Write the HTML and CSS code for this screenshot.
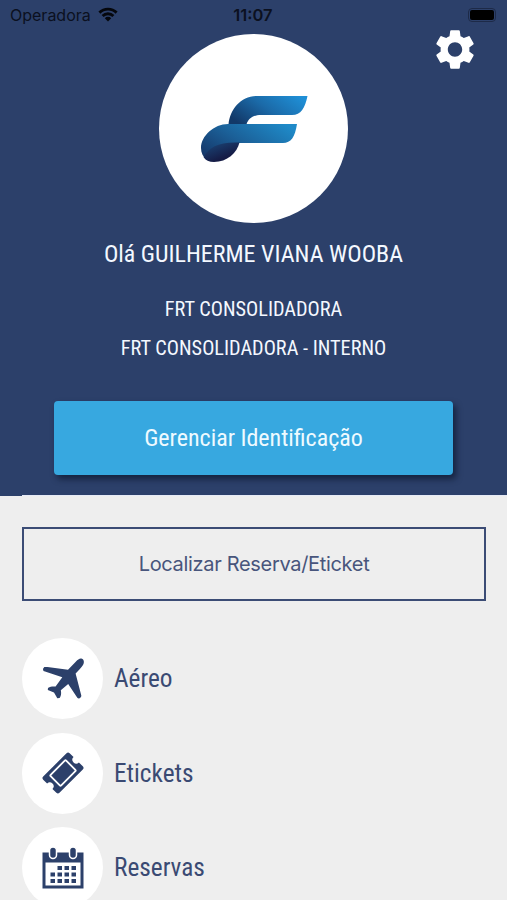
FILE: index.html
```html
<!DOCTYPE html>
<html lang="pt-BR">
<head>
    <meta charset="UTF-8">
    <meta name="viewport" content="width=device-width, initial-scale=1.0">
    <title>FRT Consolidadora</title>
    <link rel="stylesheet" href="styles.css">
</head>
<body>
    <header>
        <div class="status-bar">
            <div class="carrier">
                <span>Operadora</span>
                <svg class="wifi" viewBox="0 0 20 15">
                    <path d="M0.4 4.6 A13.6 13.6 0 0 1 19.6 4.6 L17.6 6.7 A10.8 10.8 0 0 0 2.4 6.7 Z"/>
                    <path d="M3.6 7.9 A9 9 0 0 1 16.4 7.9 L14.4 10 A6.2 6.2 0 0 0 5.6 10 Z"/>
                    <path d="M6.8 11.2 A4.5 4.5 0 0 1 13.2 11.2 L10 14.4 Z"/>
                </svg>
            </div>
            <span class="clock">11:07</span>
            <div class="battery"></div>
        </div>

        <button class="settings" aria-label="Configurações">
            <svg viewBox="2 2 20 20">
                <path d="M19.14 12.94c.04-.3.06-.61.06-.94 0-.32-.02-.64-.07-.94l2.03-1.58c.18-.14.23-.41.12-.61l-1.92-3.32c-.12-.22-.37-.29-.59-.22l-2.39.96c-.5-.38-1.03-.7-1.62-.94l-.36-2.54c-.04-.24-.24-.41-.48-.41h-3.84c-.24 0-.43.17-.47.41l-.36 2.54c-.59.24-1.13.57-1.62.94l-2.39-.96c-.22-.08-.47 0-.59.22L2.74 8.87c-.12.21-.08.47.12.61l2.03 1.58c-.05.3-.09.63-.09.94s.02.64.07.94l-2.03 1.58c-.18.14-.23.41-.12.61l1.92 3.32c.12.22.37.29.59.22l2.39-.96c.5.38 1.03.7 1.62.94l.36 2.54c.05.24.24.41.48.41h3.84c.24 0 .44-.17.47-.41l.36-2.54c.59-.24 1.13-.56 1.62-.94l2.39.96c.22.08.47 0 .59-.22l1.92-3.32c.12-.22.07-.47-.12-.61l-2.01-1.58zM12 15.6c-1.98 0-3.6-1.62-3.6-3.6s1.62-3.6 3.6-3.6 3.6 1.62 3.6 3.6-1.62 3.6-3.6 3.6z"/>
            </svg>
        </button>

        <div class="avatar">
            <svg viewBox="0 0 108 68">
                <defs>
                    <linearGradient id="top" x1="0" y1="0.7" x2="1" y2="0.2">
                        <stop offset="0" stop-color="#123868"/>
                        <stop offset="0.5" stop-color="#1b6aa8"/>
                        <stop offset="1" stop-color="#1f8fd6"/>
                    </linearGradient>
                    <linearGradient id="bottom" x1="0" y1="0.8" x2="1" y2="0.2">
                        <stop offset="0" stop-color="#15386a"/>
                        <stop offset="0.45" stop-color="#1b6098"/>
                        <stop offset="1" stop-color="#1f8ac8"/>
                    </linearGradient>
                    <linearGradient id="leaf" x1="0.2" y1="0" x2="0.7" y2="0.7">
                        <stop offset="0" stop-color="#1a4577"/>
                        <stop offset="1" stop-color="#151b45"/>
                    </linearGradient>
                </defs>
                <path fill="url(#top)" d="M28.500 29.500 C30 14 41 1 57 1 L107.500 1 C105 13 101 20 92 20 L61 20 C53 20 48 24 46.500 29.500 Z"/>
                <path fill="url(#bottom)" d="M1 53 C1 41 14 29 28 29 L97 29 C95 42 91 48 83 48 L30 48 C22 50 14 56 7 65 C3 62 1 58 1 53 Z"/>
                <path fill="url(#leaf)" d="M3.500 62 C9 52 19 46.500 39.500 47.500 C37 58 27 67 14 67 C9 67 5.500 65.500 3.500 62 Z"/>
            </svg>
        </div>

        <h1 class="condensed">Olá GUILHERME VIANA WOOBA</h1>
        <p class="agency condensed">FRT CONSOLIDADORA</p>
        <p class="agency condensed">FRT CONSOLIDADORA - INTERNO</p>

        <button class="manage condensed">Gerenciar Identificação</button>
    </header>

    <main>
        <button class="locate">Localizar Reserva/Eticket</button>

        <ul class="menu">
            <li>
                <span class="icon">
                    <svg viewBox="0 0 42 42">
                        <path d="M34 3.500 C36 1.500 38 -0.200 40 0.800 C42.300 2 42.300 4.800 41 7 C39.500 9.500 36 12.800 33.600 15.600 L39.300 37.500 C39.600 39.500 37 41.500 35.300 39.800 L26.200 26 L18.800 32.300 C19.500 35.300 19 37.800 17.600 40 L15.300 40.300 L12 34.500 L5.800 32 L6 29.900 C8.500 28.300 10.800 28.300 13.600 28.500 L20.300 19.300 L1.500 13 L0.900 11 L2.300 9.100 L5.500 9 L26 11.700 Z"/>
                    </svg>
                </span>
                <span class="label condensed">Aéreo</span>
            </li>
            <li>
                <span class="icon">
                    <svg viewBox="0 0 42 42">
                        <g transform="translate(21 21) rotate(-45)">
                            <path d="M-16.500 -11.500 H16.500 Q18.700 -11.500 18.700 -9.300 V-3.800 A3.800 3.800 0 0 0 18.700 3.800 V9.300 Q18.700 11.500 16.500 11.500 H-16.500 Q-18.700 11.500 -18.700 9.300 V3.800 A3.800 3.800 0 0 0 -18.700 -3.800 V-9.300 Q-18.700 -11.500 -16.500 -11.500 Z"/>
                            <rect class="ticket-line" x="-11" y="-7.500" width="22" height="15" rx="1"/>
                        </g>
                    </svg>
                </span>
                <span class="label condensed">Etickets</span>
            </li>
            <li>
                <span class="icon">
                    <svg viewBox="0 0 42 42">
                        <path fill-rule="evenodd" d="M0.500 5.500 H41.500 V41.500 H0.500 Z M3.500 15.500 V38.500 H38.500 V15.500 Z"/>
                        <rect class="ring" x="7.500" y="0" width="7" height="11.500" rx="3.500"/>
                        <rect class="ring" x="27.500" y="0" width="7" height="11.500" rx="3.500"/>
                        <path d="M15.500 19h4.500v4h-4.500z M22.500 19h4.500v4h-4.500z M29.500 19h4.500v4h-4.500z M8.500 25.500h4.500v4h-4.500z M15.500 25.500h4.500v4h-4.500z M22.500 25.500h4.500v4h-4.500z M29.500 25.500h4.500v4h-4.500z M8.500 32h4.500v4h-4.500z M15.500 32h4.500v4h-4.500z M22.500 32h4.500v4h-4.500z M29.500 32h4.500v4h-4.500z"/>
                    </svg>
                </span>
                <span class="label condensed">Reservas</span>
            </li>
        </ul>
    </main>
</body>
</html>
```
FILE: styles.css
```css
* {
    box-sizing: border-box;
}

body {
    margin: 0;
    height: 900px;
    overflow: hidden;
    background-color: #eeeeee;
    font-family: Inter, "Liberation Sans", sans-serif;
}

button {
    border: none;
    padding: 0;
    font-family: inherit;
}

.condensed {
    font-family: "Roboto Condensed", Roboto, sans-serif;
    font-stretch: 75%;
    font-weight: 400;
}

header {
    position: relative;
    display: flex;
    flex-direction: column;
    align-items: center;
    height: 496px;
    background-color: #2c406a;
    color: #f4f8ff;
}

/* light line where the content starts */
header::after {
    content: "";
    position: absolute;
    left: 22px;
    right: 0;
    bottom: 0;
    height: 1px;
    background-color: #e6eaf6;
}

.status-bar {
    display: grid;
    grid-template-columns: 1fr auto 1fr;
    align-items: center;
    width: 100%;
    height: 34px;
    padding: 0 11px 5px 10px;
    color: #0b1020;
    font-size: 16px;
}

.carrier {
    display: flex;
    align-items: center;
    gap: 7px;
}

.wifi {
    width: 20px;
    height: 15px;
    fill: #05070d;
}

.clock {
    font-size: 16.5px;
    font-weight: 600;
}

.battery {
    justify-self: end;
    width: 28px;
    height: 14px;
    border: 1px solid #1d2a48;
    border-radius: 4px;
    background-color: #000;
    background-clip: content-box;
    padding: 1px;
}

.settings {
    position: absolute;
    top: 29px;
    right: 32px;
    width: 40px;
    height: 41px;
    background: none;
}

.settings svg {
    display: block;
    width: 100%;
    height: 100%;
    fill: #fff;
}

.avatar {
    display: flex;
    align-items: center;
    justify-content: center;
    width: 189px;
    height: 189px;
    border-radius: 50%;
    background-color: #fff;
}

.avatar svg {
    width: 108px;
    height: 68px;
}

h1 {
    margin: 16px 0 28px;
    font-size: 24px;
    line-height: 30px;
}

.agency {
    margin: 0 0 15px;
    font-size: 20.3px;
    line-height: 24px;
}

.manage {
    width: 399px;
    height: 74px;
    margin-top: 26px;
    border-radius: 4px;
    background-color: #37a8e0;
    box-shadow: 3px 4px 6px rgba(8, 18, 40, 0.65);
    color: #eefaff;
    font-size: 24px;
}

main {
    padding: 31px 21px 0 22px;
}

.locate {
    display: block;
    width: 464px;
    height: 74px;
    border: 2px solid #3b4c75;
    background: none;
    color: #48557c;
    font-size: 20px;
    letter-spacing: -0.32px;
}

.menu {
    display: flex;
    flex-direction: column;
    gap: 13.5px;
    margin: 37px 0 0;
    padding: 0;
    list-style: none;
}

.menu li {
    display: flex;
    align-items: center;
    gap: 11px;
}

.icon {
    display: flex;
    align-items: center;
    justify-content: center;
    width: 81px;
    height: 81px;
    border-radius: 50%;
    background-color: #fff;
}

.icon svg {
    width: 42px;
    height: 42px;
    fill: #2c406a;
}

.ticket-line {
    fill: none;
    stroke: #fff;
    stroke-width: 1.8;
}

.ring {
    stroke: #fff;
    stroke-width: 1.5;
}

.label {
    color: #3a4a73;
    font-size: 25.3px;
}
```
